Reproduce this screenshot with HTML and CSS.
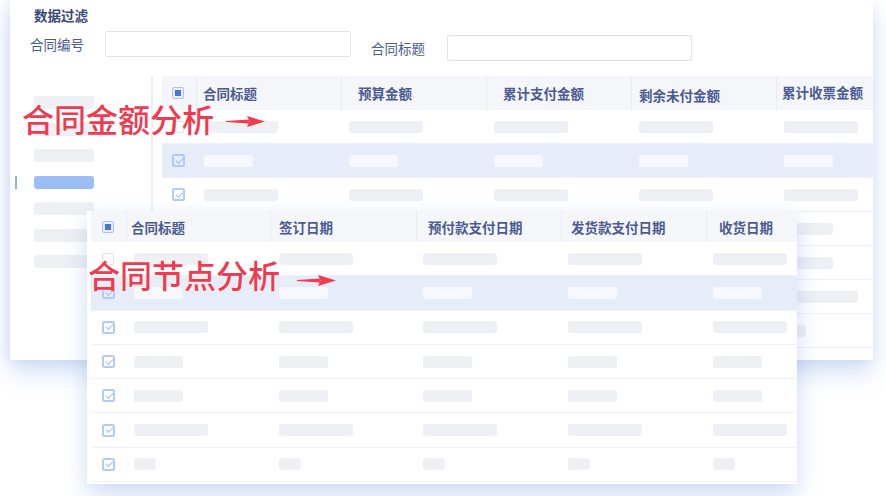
FILE: index.html
```html
<!DOCTYPE html>
<html lang="zh-CN">
<head>
    <meta charset="UTF-8">
    <meta name="viewport" content="width=device-width, initial-scale=1.0">
    <title>合同分析</title>
    <link rel="stylesheet" href="styles.css">
</head>
<body>
    <div class="stage">
        <!-- 后面的卡片：合同金额 -->
        <div class="card-back">
            <div class="filter">
                <div class="filter-title">数据过滤</div>
                <div class="filter-row">
                    <div class="field">
                        <label>合同编号</label>
                        <span class="input"></span>
                    </div>
                    <div class="field field-low">
                        <label>合同标题</label>
                        <span class="input"></span>
                    </div>
                </div>
            </div>

            <div class="back-body">
                <div class="side">
                    <div class="side-item"><span class="side-mark"></span><span class="side-bar"></span></div>
                    <div class="side-item"><span class="side-mark"></span><span class="side-bar"></span></div>
                    <div class="side-item"><span class="side-mark"></span><span class="side-bar"></span></div>
                    <div class="side-item active"><span class="side-mark"></span><span class="side-bar"></span></div>
                    <div class="side-item"><span class="side-mark"></span><span class="side-bar"></span></div>
                    <div class="side-item"><span class="side-mark"></span><span class="side-bar"></span></div>
                    <div class="side-item"><span class="side-mark"></span><span class="side-bar"></span></div>
                </div>

                <div class="grid grid-back">
                    <div class="thead">
                        <div class="th check"><span class="cb cb-all"></span></div>
                        <div class="th p7">合同标题</div>
                        <div class="th p17">预算金额</div>
                        <div class="th p17">累计支付金额</div>
                        <div class="th p8 low">剩余未付金额</div>
                        <div class="th p6 high">累计收票金额</div>
                    </div>
                    <div class="trow">
                        <div class="td check"><span class="cb"></span></div>
                        <div class="td"><i class="bar w74"></i></div>
                        <div class="td"><i class="bar w74"></i></div>
                        <div class="td"><i class="bar w74"></i></div>
                        <div class="td"><i class="bar w74"></i></div>
                        <div class="td"><i class="bar w74"></i></div>
                    </div>
                    <div class="trow sel">
                        <div class="td check"><span class="cb cb-on"></span></div>
                        <div class="td"><i class="bar w49"></i></div>
                        <div class="td"><i class="bar w49"></i></div>
                        <div class="td"><i class="bar w49"></i></div>
                        <div class="td"><i class="bar w49"></i></div>
                        <div class="td"><i class="bar w49"></i></div>
                    </div>
                    <div class="trow">
                        <div class="td check"><span class="cb cb-on"></span></div>
                        <div class="td"><i class="bar w74"></i></div>
                        <div class="td"><i class="bar w74"></i></div>
                        <div class="td"><i class="bar w74"></i></div>
                        <div class="td"><i class="bar w74"></i></div>
                        <div class="td"><i class="bar w74"></i></div>
                    </div>
                    <div class="trow">
                        <div class="td check"><span class="cb cb-on"></span></div>
                        <div class="td"><i class="bar w49"></i></div>
                        <div class="td"><i class="bar w49"></i></div>
                        <div class="td"><i class="bar w49"></i></div>
                        <div class="td"><i class="bar w49"></i></div>
                        <div class="td"><i class="bar w49"></i></div>
                    </div>
                    <div class="trow">
                        <div class="td check"><span class="cb cb-on"></span></div>
                        <div class="td"><i class="bar w49"></i></div>
                        <div class="td"><i class="bar w49"></i></div>
                        <div class="td"><i class="bar w49"></i></div>
                        <div class="td"><i class="bar w49"></i></div>
                        <div class="td"><i class="bar w49"></i></div>
                    </div>
                    <div class="trow">
                        <div class="td check"><span class="cb cb-on"></span></div>
                        <div class="td"><i class="bar w74"></i></div>
                        <div class="td"><i class="bar w74"></i></div>
                        <div class="td"><i class="bar w74"></i></div>
                        <div class="td"><i class="bar w74"></i></div>
                        <div class="td"><i class="bar w74"></i></div>
                    </div>
                    <div class="trow">
                        <div class="td check"><span class="cb cb-on"></span></div>
                        <div class="td"><i class="bar w22"></i></div>
                        <div class="td"><i class="bar w22"></i></div>
                        <div class="td"><i class="bar w22"></i></div>
                        <div class="td"><i class="bar w22"></i></div>
                        <div class="td"><i class="bar w22"></i></div>
                    </div>
                </div>
            </div>
        </div>

        <!-- 前面的卡片：合同节点 -->
        <div class="card-front">
            <div class="grid grid-front">
                <div class="thead">
                    <div class="th check"><span class="cb cb-all"></span></div>
                    <div class="th p5">合同标题</div>
                    <div class="th p9">签订日期</div>
                    <div class="th p12">预付款支付日期</div>
                    <div class="th p10">发货款支付日期</div>
                    <div class="th p13">收货日期</div>
                </div>
                <div class="trow">
                    <div class="td check"><span class="cb"></span></div>
                    <div class="td"><i class="bar w74"></i></div>
                    <div class="td"><i class="bar w74"></i></div>
                    <div class="td"><i class="bar w74"></i></div>
                    <div class="td"><i class="bar w74"></i></div>
                    <div class="td"><i class="bar w74"></i></div>
                </div>
                <div class="trow sel">
                    <div class="td check"><span class="cb cb-on"></span></div>
                    <div class="td"><i class="bar w49"></i></div>
                    <div class="td"><i class="bar w49"></i></div>
                    <div class="td"><i class="bar w49"></i></div>
                    <div class="td"><i class="bar w49"></i></div>
                    <div class="td"><i class="bar w49"></i></div>
                </div>
                <div class="trow">
                    <div class="td check"><span class="cb cb-on"></span></div>
                    <div class="td"><i class="bar w74"></i></div>
                    <div class="td"><i class="bar w74"></i></div>
                    <div class="td"><i class="bar w74"></i></div>
                    <div class="td"><i class="bar w74"></i></div>
                    <div class="td"><i class="bar w74"></i></div>
                </div>
                <div class="trow">
                    <div class="td check"><span class="cb cb-on"></span></div>
                    <div class="td"><i class="bar w49"></i></div>
                    <div class="td"><i class="bar w49"></i></div>
                    <div class="td"><i class="bar w49"></i></div>
                    <div class="td"><i class="bar w49"></i></div>
                    <div class="td"><i class="bar w49"></i></div>
                </div>
                <div class="trow">
                    <div class="td check"><span class="cb cb-on"></span></div>
                    <div class="td"><i class="bar w49"></i></div>
                    <div class="td"><i class="bar w49"></i></div>
                    <div class="td"><i class="bar w49"></i></div>
                    <div class="td"><i class="bar w49"></i></div>
                    <div class="td"><i class="bar w49"></i></div>
                </div>
                <div class="trow">
                    <div class="td check"><span class="cb cb-on"></span></div>
                    <div class="td"><i class="bar w74"></i></div>
                    <div class="td"><i class="bar w74"></i></div>
                    <div class="td"><i class="bar w74"></i></div>
                    <div class="td"><i class="bar w74"></i></div>
                    <div class="td"><i class="bar w74"></i></div>
                </div>
                <div class="trow">
                    <div class="td check"><span class="cb cb-on"></span></div>
                    <div class="td"><i class="bar w22"></i></div>
                    <div class="td"><i class="bar w22"></i></div>
                    <div class="td"><i class="bar w22"></i></div>
                    <div class="td"><i class="bar w22"></i></div>
                    <div class="td"><i class="bar w22"></i></div>
                </div>
            </div>
        </div>

        <!-- 红色标注 -->
        <div class="note note-amount">
            <span>合同金额分析</span>
            <svg class="arrow" width="39" height="13" viewBox="0 0 39 13"><path d="M0 6 L23 4.6 L23 8.4 L0 7 Z M21 1 L39 6.5 L21 12 L23.5 6.5 Z" fill="#f03a50"/></svg>
        </div>
        <div class="note note-node">
            <span>合同节点分析</span>
            <svg class="arrow" width="39" height="13" viewBox="0 0 39 13"><path d="M0 6 L23 4.6 L23 8.4 L0 7 Z M21 1 L39 6.5 L21 12 L23.5 6.5 Z" fill="#f03a50"/></svg>
        </div>
    </div>
</body>
</html>
```

FILE: styles.css
```css
* {
    box-sizing: border-box;
}

body {
    margin: 0;
    width: 886px;
    height: 496px;
    overflow: hidden;
    background-color: #fff;
    font-family: "Noto Sans CJK SC", sans-serif;
}

.stage {
    position: relative;
    width: 886px;
    height: 496px;
}

/* 后面的卡片 */
.card-back {
    margin-left: 10px;
    width: 863px;
    height: 360px;
    background-color: #fff;
    display: flex;
    flex-direction: column;
    box-shadow: 0 12px 22px rgba(88, 136, 222, 0.28), -3px 0 10px rgba(110, 140, 205, 0.12);
}

.filter {
    padding: 6px 0 0 20px;
}

.filter-title {
    margin-left: 4px;
    font-size: 13.5px;
    line-height: 18px;
    font-weight: 700;
    color: #3b4a7a;
}

.filter-row {
    display: flex;
    align-items: flex-start;
    margin-top: 7px;
}

.field {
    display: flex;
    align-items: center;
}

.field label {
    font-size: 13.5px;
    color: #4b5c94;
    margin-right: 21px;
    white-space: nowrap;
}

.field .input {
    width: 246px;
    height: 26px;
    border: 1px solid #e0e4ec;
    border-radius: 2px;
}

.field-low {
    margin-left: 20px;
    margin-top: 4px;
}

.field-low label {
    margin-right: 22px;
}

.field-low .input {
    width: 245px;
}

.back-body {
    display: flex;
    flex: 1;
    min-height: 0;
    margin-top: 14px;
}

.side {
    width: 143px;
    border-right: 2px solid #eef0f5;
    padding-top: 21px;
    display: flex;
    flex-direction: column;
    gap: 13.5px;
}

.side-item {
    display: flex;
    align-items: center;
    padding-left: 5px;
    height: 13px;
}

.side-mark {
    width: 2px;
    height: 13px;
    margin-right: 17px;
}

.side-bar {
    width: 60px;
    height: 13px;
    border-radius: 3px;
    background-color: #eef0f4;
}

.side-item.active .side-mark {
    background-color: #8eb0f2;
}

.side-item.active .side-bar {
    background-color: #9dbdf5;
}

/* 表格 */
.grid-back {
    flex: 1;
    margin-left: 9px;
    padding-top: 1px;
}

.thead,
.trow {
    display: grid;
}

.grid-back .thead,
.grid-back .trow {
    grid-template-columns: 34px 145px 145px 145px 145px 97px;
    height: 34px;
}

.grid-front .thead,
.grid-front .trow {
    grid-template-columns: 35px 144px 146px 145px 145px 91px;
}

.grid-front .thead {
    height: 31px;
}

.grid-front .trow {
    height: 34.3px;
}

.thead {
    background-color: #f5f6fa;
}

.th {
    display: flex;
    align-items: center;
    font-size: 13.5px;
    font-weight: 600;
    color: #4b5b92;
    border-left: 1px solid #e9ebf1;
    white-space: nowrap;
    overflow: hidden;
}

.th.check {
    border-left: none;
}

.th.low {
    padding-top: 4px;
}

.th.high {
    padding-bottom: 3px;
}

.p5 { padding-left: 4px; }
.p6 { padding-left: 5px; }
.p7 { padding-left: 6px; }
.p8 { padding-left: 7px; }
.p9 { padding-left: 8px; }
.p10 { padding-left: 9px; }
.p12 { padding-left: 11px; }
.p13 { padding-left: 12px; }
.p17 { padding-left: 16px; }

.trow {
    border-bottom: 1px solid #f0f1f5;
}

.trow.sel {
    background-color: #e6ecf8;
}

.td {
    display: flex;
    align-items: center;
    padding-left: 8px;
}

.grid-front .td {
    padding-left: 7px;
}

.grid-front .td:nth-child(2) {
    padding-left: 8px;
}

.grid-front .td:nth-child(3) {
    padding-left: 9px;
}

.check,
.td.check {
    padding-left: 10px;
}

.grid-front .check,
.grid-front .td.check {
    padding-left: 11px;
}

.bar {
    display: block;
    height: 12px;
    border-radius: 3px;
    background-color: #eef0f4;
}

.sel .bar {
    background-color: #f6f8fd;
}

.w74 { width: 74px; }
.w49 { width: 49px; }
.w22 { width: 22px; }

/* 复选框 */
.cb {
    position: relative;
    display: block;
    width: 12px;
    height: 12px;
    border: 1px solid #dde2ea;
    border-radius: 2px;
    background-color: #fff;
}

.cb-all {
    border-color: #a9c2f5;
    background-color: #eaf0fd;
}

.cb-all::before {
    content: "";
    position: absolute;
    left: 2px;
    top: 2px;
    width: 6px;
    height: 6px;
    background-color: #4d70e2;
}

.cb-on {
    width: 13px;
    height: 13px;
    border: 2px solid #b2caf7;
    border-radius: 2.5px;
    background-color: transparent;
}

.cb-on::after {
    content: "";
    position: absolute;
    left: 1.5px;
    top: 1.5px;
    width: 6px;
    height: 3px;
    border-left: 1.6px solid #a3bff6;
    border-bottom: 1.6px solid #a3bff6;
    transform: rotate(-45deg);
}

/* 前面的卡片 */
.card-front {
    position: absolute;
    left: 87px;
    top: 211px;
    width: 710px;
    height: 273px;
    padding-left: 4px;
    background-color: #fff;
    box-shadow: 0 10px 22px rgba(88, 136, 222, 0.3);
}

/* 红色标注 */
.note {
    position: absolute;
    display: flex;
    align-items: center;
    font-size: 32px;
    line-height: 36px;
    font-weight: 500;
    color: #f03a50;
    white-space: nowrap;
    text-shadow: 0 0 2px #fff, 0 0 2px #fff;
}

.note-amount {
    left: 22px;
    top: 100px;
    gap: 12px;
}

.note-amount .arrow {
    margin-top: 7px;
}

.note-node {
    left: 88px;
    top: 256px;
    gap: 17px;
}

.note-node .arrow {
    margin-top: 12px;
}
```
